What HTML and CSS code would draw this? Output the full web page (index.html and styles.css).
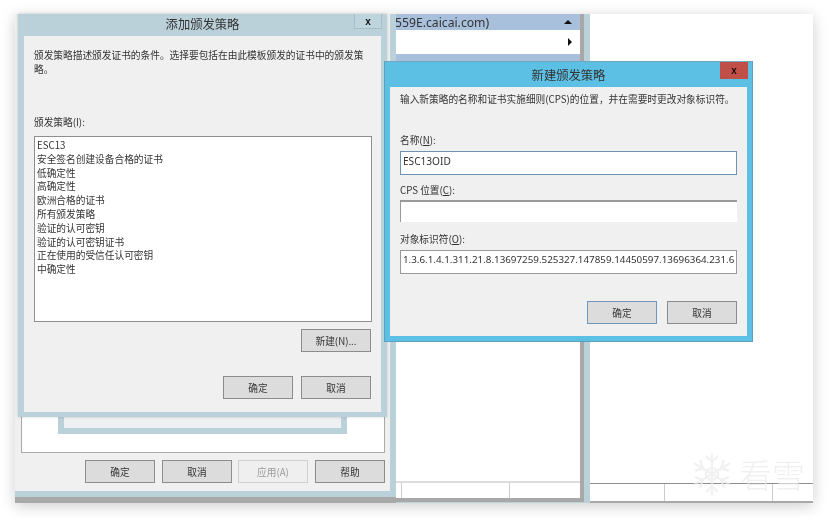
FILE: index.html
```html
<!DOCTYPE html>
<html lang="zh">
<head>
<meta charset="utf-8">
<title>新建颁发策略</title>
<link rel="stylesheet" href="styles.css">
</head>
<body>
<div class="screen">
  <section class="pane-right">
    <div class="pane-spacer"></div>
    <div class="status-row">
      <span class="cell cell-a"></span><span class="cell cell-b"></span><span class="cell"></span>
    </div>
  </section>

  <section class="pane-mid">
    <div class="mid-list">
      <div class="mid-head"><span>559E.caicai.com)</span><i class="tri-up"></i></div>
      <div class="mid-row"><i class="tri-right"></i></div>
      <div class="mid-head mid-head-2"></div>
      <div class="pane-spacer"></div>
      <div class="mid-status"><span class="cell cell-c"></span><span class="cell cell-d"></span><span class="cell"></span></div>
    </div>
  </section>

  <section class="win win-props">
    <div class="props-body">
      <div class="props-panel"></div>
      <div class="btn-row props-btns">
        <button class="btn">确定</button>
        <button class="btn">取消</button>
        <button class="btn btn-off">应用(A)</button>
        <button class="btn">帮助</button>
      </div>
    </div>
  </section>

  <section class="win win-sub"><div class="sub-body"></div></section>

  <section class="win win-add">
    <header class="titlebar title-add">
      <h1>添加颁发策略</h1>
      <span class="close close-off">x</span>
    </header>
    <div class="body body-add">
      <p class="desc">颁发策略描述颁发证书的条件。选择要包括在由此模板颁发的证书中的颁发策略。</p>
      <label class="list-label">颁发策略(I):</label>
      <ul class="list">
        <li>ESC13</li>
        <li>安全签名创建设备合格的证书</li>
        <li>低确定性</li>
        <li>高确定性</li>
        <li>欧洲合格的证书</li>
        <li>所有颁发策略</li>
        <li>验证的认可密钥</li>
        <li>验证的认可密钥证书</li>
        <li>正在使用的受信任认可密钥</li>
        <li>中确定性</li>
      </ul>
      <div class="btn-row new-row"><button class="btn">新建(N)...</button></div>
      <div class="btn-row add-btns">
        <button class="btn">确定</button>
        <button class="btn">取消</button>
      </div>
    </div>
  </section>

  <section class="win win-new">
    <header class="titlebar title-new">
      <h1>新建颁发策略</h1>
      <span class="close close-red">x</span>
    </header>
    <div class="body body-new">
      <p class="new-desc">输入新策略的名称和证书实施细则(CPS)的位置，并在需要时更改对象标识符。</p>
      <label class="f-label f-first">名称(<u>N</u>):</label>
      <div class="input input-focus">ESC13OID</div>
      <label class="f-label f-cps">CPS 位置(<u>C</u>):</label>
      <div class="input input-cps"></div>
      <label class="f-label f-oid">对象标识符(<u>O</u>):</label>
      <div class="input">1.3.6.1.4.1.311.21.8.13697259.525327.147859.14450597.13696364.231.6</div>
      <div class="btn-row new-btns">
        <button class="btn btn-default">确定</button>
        <button class="btn">取消</button>
      </div>
    </div>
  </section>

  <div class="watermark">
    <svg class="flake" width="42" height="46" viewBox="0 0 42 46" fill="none" stroke="#ececec" stroke-width="2.2">
      <path d="M21 2V44M3 12L39 34M39 12L3 34"/>
      <path d="M15 5L21 11L27 5M15 41L21 35L27 41M4 20L12 17L9 9M38 20L30 17L33 9M4 26L12 29L9 37M38 26L30 29L33 37"/>
      <circle cx="21" cy="23" r="6"/>
    </svg>
    <span class="wm-text">看雪</span>
  </div>
</div>
</body>
</html>
```
FILE: styles.css
```css
* { box-sizing: border-box; }
html, body { margin: 0; height: 100%; background: #fff; overflow: hidden; }
body { font-family: "Noto Sans CJK SC", "Liberation Sans", sans-serif; color: #333; font-size: 9.7px; }

.screen {
  position: absolute; left: 15px; top: 14px; width: 798px; height: 489px;
  background: #fff; box-shadow: 0 3px 14px rgba(0,0,0,.2); filter: blur(.35px);
}

.pane-right {
  position: absolute; left: 575px; top: 0; width: 223px; height: 489px;
  display: flex; flex-direction: column;
  background: #fff; border-bottom: 2px solid #a9a9a9;
}
.pane-spacer { flex: 1; }
.status-row { display: flex; height: 18px; border-top: 1px solid #8f8f8f; }
.cell { display: block; height: 100%; }
.cell-a { width: 75px; border-right: 1px solid #ccc; }
.cell-b { width: 108px; border-right: 1px solid #ccc; }

.pane-mid {
  position: absolute; left: 375px; top: 0; width: 200px; height: 489px;
  background: #bad1da; padding: 0 6px;
}
.mid-list {
  display: flex; flex-direction: column; height: 488px; width: 188px;
  background: #fff; border-right: 4px solid #a8a8a8; border-bottom: 4px solid #a8a8a8;
}
.mid-head {
  height: 16px; background: #a9c0dc; flex: none; display: flex; align-items: center;
  justify-content: space-between; font-size: 12.2px; padding-right: 8px; color: #333;
  font-family: "Noto Sans", "Liberation Sans", sans-serif; overflow: hidden;
}
.mid-head span { margin-left: -1px; }
.mid-row { height: 24px; flex: none; display: flex; align-items: center; justify-content: flex-end; padding-right: 8px; }
.mid-head-2 { height: 10px; }
.tri-up { width: 0; height: 0; border-left: 4px solid transparent; border-right: 4px solid transparent; border-bottom: 4px solid #111; }
.tri-right { width: 0; height: 0; border-top: 4px solid transparent; border-bottom: 4px solid transparent; border-left: 4px solid #111; }
.mid-status { display: flex; height: 17px; flex: none; border-top: 2px solid #ddd; }
.cell-c { width: 6px; border-right: 1px solid #ccc; }
.cell-d { width: 108px; border-right: 1px solid #ccc; }

.win { position: absolute; }
.win-props {
  left: 0; top: 0; width: 381px; height: 489px;
  background: #bad1da; border-bottom: 6px solid #a9a9a9; padding: 0 6px 6px 0;
}
.props-body { height: 477px; background: #f0f0f0; padding: 0 5px 0 6px; display: flex; flex-direction: column; justify-content: flex-end; }
.props-panel { height: 439px; background: #fff; border: 1px solid #aaa; }
.props-btns { padding: 7px 0 8px; gap: 7px; }
.props-btns .btn-off { margin-left: -1px; }

.win-sub { left: 43px; top: 380px; width: 289px; height: 40px; background: #bad1da; padding: 0 6px 6px; }
.sub-body { height: 100%; background: #eef1f1; }

.win-add {
  left: 3px; top: 0; width: 369px; height: 403px;
  background: #bad1da; padding: 0 6px 5px; display: flex; flex-direction: column;
  box-shadow: 0 0 3px rgba(0,0,0,.18);
}
.titlebar { position: relative; flex: none; display: flex; justify-content: center; align-items: center; }
.titlebar h1 { margin: 0; font-size: 12.3px; font-weight: 400; color: #333; }
.title-add { height: 22px; }
.title-add h1 { padding-bottom: 3px; }
.close {
  position: absolute; top: 0; right: 0; height: 15px; width: 28px;
  display: flex; align-items: center; justify-content: center;
  font: 700 10px "Liberation Sans", sans-serif; color: #111;
}
.close-off { right: -1px; border: 1px solid #a8bec6; border-top: 0; background: #bfd5dd; }
.close-red { background: #bf4f47; top: 0; right: -1px; height: 17px; color: #1d0c0c; }
.body { flex: 1; background: #f0f0f0; display: flex; flex-direction: column; min-height: 0; }

.body-add { padding: 12px 10px 13px; }
.desc { margin: 0; line-height: 14px; width: 338px; }
.list-label { margin-top: 39px; line-height: 14px; display: block; }
.list {
  list-style: none; margin: 7px 0 0; padding: 2px 2px; width: 338px; height: 186px; flex: none;
  background: #fff; border: 1px solid #8f8f8f; line-height: 13.8px;
}
.btn-row { display: flex; justify-content: flex-end; }
.new-row { margin-top: 7px; }
.add-btns { margin-top: 24px; gap: 8px; }
.btn {
  width: 70px; height: 23px; padding: 0; flex: none;
  background: #dcdcdc; border: 1px solid #8c8c8c; border-radius: 0;
  font: inherit; font-size: 9.7px; color: #333;
  display: flex; align-items: center; justify-content: center;
}
.btn-off { background: #efefef; border-color: #d0d0d0; color: #9a9a9a; }
.btn-default { border-color: #6f96bd; }

.win-new {
  left: 369px; top: 47px; width: 369px; height: 281px;
  background: #5cbfe4; border: 1px solid #5c9fbe; border-top-color: #6fa7bf;
  padding: 0 5px 5px; display: flex; flex-direction: column;
}
.title-new { height: 25px; }
.title-new h1 { padding-top: 1px; }
.body-new { padding: 0 10px; }
.new-desc { margin: 5px 0 0; line-height: 14px; white-space: nowrap; }
.f-label { display: block; line-height: 14px; }
.f-first { margin-top: 27px; }
.f-cps { margin-top: 8px; }
.f-oid { margin-top: 10px; }
.input {
  margin-top: 4px; width: 337px; height: 24px; background: #fff;
  border: 1px solid #9a9a9a; padding: 0 2px; line-height: 18px;
  font-family: "Noto Sans", "Liberation Sans", sans-serif; font-size: 9.82px;
  white-space: nowrap; overflow: hidden;
}
.input-focus { border-color: #6f93b4; font-size: 10.1px; }
.input-cps { margin-top: 3px; height: 22px; border-right: 0; border-bottom: 0; border-left-color: #999; border-top-width: 2px; }
.new-btns { margin-top: 27px; gap: 10px; }

.watermark {
  position: absolute; left: 676px; top: 437px; display: flex; align-items: center; gap: 6px;
  opacity: .7;
}
.wm-text { font-size: 33px; line-height: 44px; font-weight: 300; color: #ebebeb; }
```
